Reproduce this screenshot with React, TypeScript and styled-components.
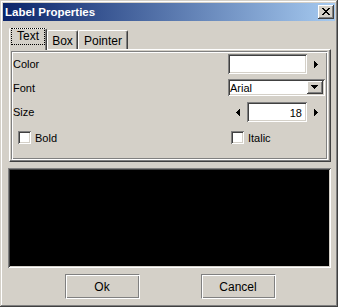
import React from "react";
import styled, { createGlobalStyle } from "styled-components";

const Global = createGlobalStyle`
  html, body { margin: 0; padding: 0; background: #d4d0c8; }
  body { font-family: "Liberation Sans", Arial, sans-serif; font-size: 11px; color: #000; }
  * { box-sizing: border-box; }
`;

const Window = styled.div`
  width: 338px;
  height: 307px;
  padding: 3px;
  background: #d4d0c8;
  box-shadow: inset -1px -1px #404040, inset 1px 1px #d4d0c8, inset -2px -2px #808080, inset 2px 2px #fff;
  display: flex;
  flex-direction: column;
`;

const TitleBar = styled.div`
  height: 18px;
  flex: none;
  background: linear-gradient(to right, #0a246a, #a6caf0);
  display: flex;
  align-items: center;
  justify-content: space-between;
  padding: 0 1px 0 2px;
`;

const TitleText = styled.span`
  color: #fff;
  font-weight: bold;
  font-size: 11.5px;
  line-height: 14px;
`;

const CloseButton = styled.div`
  width: 16px;
  height: 14px;
  background: #d4d0c8;
  box-shadow: inset -1px -1px #404040, inset 1px 1px #fff, inset -2px -2px #808080;
  display: flex;
  align-items: center;
  justify-content: center;
  padding: 0 1px 1px 0;
`;

const Body = styled.div`
  flex: 1;
  display: flex;
  flex-direction: column;
  padding: 7px 4px 0 5px;
`;

const TabStrip = styled.div`
  display: flex;
  align-items: flex-end;
  height: 21px;
  padding-left: 1px;
`;

const Tab = styled.div<{ $active?: boolean; $w: number }>`
  position: relative;
  z-index: ${(p) => (p.$active ? 1 : 0)};
  width: ${(p) => p.$w}px;
  height: ${(p) => (p.$active ? 22 : 19)}px;
  margin-bottom: ${(p) => (p.$active ? -1 : 0)}px;
  background: #d4d0c8;
  border-left: 1px solid #fff;
  border-top: 1px solid #fff;
  border-right: 1px solid #404040;
  border-radius: 2px 2px 0 0;
  box-shadow: inset -1px 0 #808080;
  display: flex;
  align-items: ${(p) => (p.$active ? "flex-start" : "center")};
  justify-content: center;
  padding-top: ${(p) => (p.$active ? 0 : 1)}px;
  font-size: 12px;
`;

const FocusText = styled.span`
  outline: 1px dotted #000;
  outline-offset: 0;
  padding: 1px 5px 1px 5px;
  line-height: 13px;
  margin-top: 0;
`;

const Panel = styled.div`
  margin-left: 1px;
  height: 113px;
  flex: none;
  border-top: 1px solid #fff;
  border-left: 1px solid #fff;
  border-right: 1px solid #404040;
  border-bottom: 1px solid #404040;
  box-shadow: inset -1px -1px #808080;
  padding: 1px 2px 1px 1px;
  display: flex;
`;

const Frame = styled.div`
  flex: 1;
  border: 1px solid;
  border-color: #808080 #fff #fff #808080;
  box-shadow: inset 1px 1px #fff, inset -1px -1px #808080;
  padding: 2px 2px 0 1px;
  display: flex;
  flex-direction: column;
`;

const Row = styled.div<{ $h: number; $mt?: number }>`
  display: flex;
  align-items: center;
  justify-content: space-between;
  height: ${(p) => p.$h}px;
  margin-top: ${(p) => p.$mt ?? 0}px;
`;

const Label = styled.span`
  font-size: 11px;
  line-height: 13px;
  padding-top: 1px;
`;

const Group = styled.div`
  display: flex;
  align-items: center;
  height: 100%;
`;

const Sunken = styled.div<{ $w: number; $h: number }>`
  width: ${(p) => p.$w}px;
  height: ${(p) => p.$h}px;
  background: #fff;
  box-shadow: inset 1px 1px #808080, inset -1px -1px #fff, inset 2px 2px #404040, inset -2px -2px #d4d0c8;
`;

const SpinInput = styled(Sunken)`
  display: flex;
  align-items: center;
  justify-content: flex-end;
  padding: 1px 5px 0 0;
  font-size: 11px;
`;

const ArrowSlot = styled.div`
  width: 18px;
  height: 100%;
  display: flex;
  align-items: center;
  justify-content: center;
`;

const Select = styled.div`
  width: 97px;
  height: 17px;
  background: #fff;
  box-shadow: inset 1px 1px #808080, inset -1px -1px #fff, inset 2px 2px #404040, inset -2px -2px #d4d0c8;
  display: flex;
  align-items: center;
  justify-content: space-between;
  padding: 2px 2px 2px 2px;
  font-size: 11px;
`;

const SelectText = styled.span`
  padding-top: 1px;
`;

const DropButton = styled.div`
  width: 16px;
  height: 13px;
  background: #d4d0c8;
  box-shadow: inset -1px -1px #404040, inset 1px 1px #fff, inset -2px -2px #808080;
  display: flex;
  align-items: center;
  justify-content: center;
  padding: 0 1px 1px 0;
`;

const CheckRow = styled.div`
  display: grid;
  grid-template-columns: 1fr 97px;
  height: 13px;
  margin-top: 9px;
`;

const CheckItem = styled.label<{ $indent: number }>`
  display: flex;
  align-items: center;
  gap: 4px;
  padding-left: ${(p) => p.$indent}px;
  font-size: 11px;
`;

const CheckBox = styled.span`
  width: 13px;
  height: 13px;
  flex: none;
  background: #fff;
  box-shadow: inset 1px 1px #808080, inset -1px -1px #fff, inset 2px 2px #404040, inset -2px -2px #d4d0c8;
`;

const Preview = styled.div`
  margin-top: 6px;
  height: 100px;
  flex: none;
  background: #000;
  box-shadow: inset 1px 1px #808080, inset -1px -1px #fff, inset 2px 2px #404040, inset -2px -2px #d4d0c8;
`;

const ButtonRow = styled.div`
  margin-top: 6px;
  display: flex;
  justify-content: center;
  gap: 61px;
  padding-left: 1px;
`;

const Button = styled.button`
  width: 75px;
  height: 25px;
  background: #d4d0c8;
  border: 1px solid;
  border-color: #808080 #fff #fff #808080;
  box-shadow: inset 1px 1px #fff, inset -1px -1px #808080;
  font-family: "Liberation Sans", Arial, sans-serif;
  font-size: 12px;
  color: #000;
  padding: 1px 0 0 0;
  margin: 0;
`;

const CloseGlyph = () => (
  <svg width="8" height="7" viewBox="0 0 8 7" shapeRendering="crispEdges">
    <path
      fill="#000"
      d="M0 0h2v1H0z M6 0h2v1H6z M1 1h2v1H1z M5 1h2v1H5z M2 2h4v1H2z M3 3h2v1H3z M2 4h4v1H2z M1 5h2v1H1z M5 5h2v1H5z M0 6h2v1H0z M6 6h2v1H6z"
    />
  </svg>
);

const ArrowRight = () => (
  <svg width="4" height="7" viewBox="0 0 4 7" shapeRendering="crispEdges">
    <path fill="#000" d="M0 0h1v7H0z M1 1h1v5H1z M2 2h1v3H2z M3 3h1v1H3z" />
  </svg>
);

const ArrowLeft = () => (
  <svg width="4" height="7" viewBox="0 0 4 7" shapeRendering="crispEdges">
    <path fill="#000" d="M3 0h1v7H3z M2 1h1v5H2z M1 2h1v3H1z M0 3h1v1H0z" />
  </svg>
);

const ArrowDown = () => (
  <svg width="7" height="4" viewBox="0 0 7 4" shapeRendering="crispEdges">
    <path fill="#000" d="M0 0h7v1H0z M1 1h5v1H1z M2 2h3v1H2z M3 3h1v1H3z" />
  </svg>
);

export default function App() {
  return (
    <>
      <Global />
      <Window>
        <TitleBar>
          <TitleText>Label Properties</TitleText>
          <CloseButton>
            <CloseGlyph />
          </CloseButton>
        </TitleBar>
        <Body>
          <TabStrip>
            <Tab $active $w={38}>
              <FocusText>Text</FocusText>
            </Tab>
            <Tab $w={31}>Box</Tab>
            <Tab $w={50}>Pointer</Tab>
          </TabStrip>
          <Panel>
            <Frame>
              <Row $h={20}>
                <Label>Color</Label>
                <Group>
                  <Sunken $w={79} $h={20} />
                  <ArrowSlot>
                    <ArrowRight />
                  </ArrowSlot>
                </Group>
              </Row>
              <Row $h={17} $mt={5}>
                <Label>Font</Label>
                <Select>
                  <SelectText>Arial</SelectText>
                  <DropButton>
                    <ArrowDown />
                  </DropButton>
                </Select>
              </Row>
              <Row $h={20} $mt={6}>
                <Label>Size</Label>
                <Group>
                  <ArrowSlot>
                    <ArrowLeft />
                  </ArrowSlot>
                  <SpinInput $w={60} $h={20}>18</SpinInput>
                  <ArrowSlot>
                    <ArrowRight />
                  </ArrowSlot>
                </Group>
              </Row>
              <CheckRow>
                <CheckItem $indent={5}>
                  <CheckBox />
                  Bold
                </CheckItem>
                <CheckItem $indent={3}>
                  <CheckBox />
                  Italic
                </CheckItem>
              </CheckRow>
            </Frame>
          </Panel>
          <Preview />
          <ButtonRow>
            <Button>Ok</Button>
            <Button>Cancel</Button>
          </ButtonRow>
        </Body>
      </Window>
    </>
  );
}
